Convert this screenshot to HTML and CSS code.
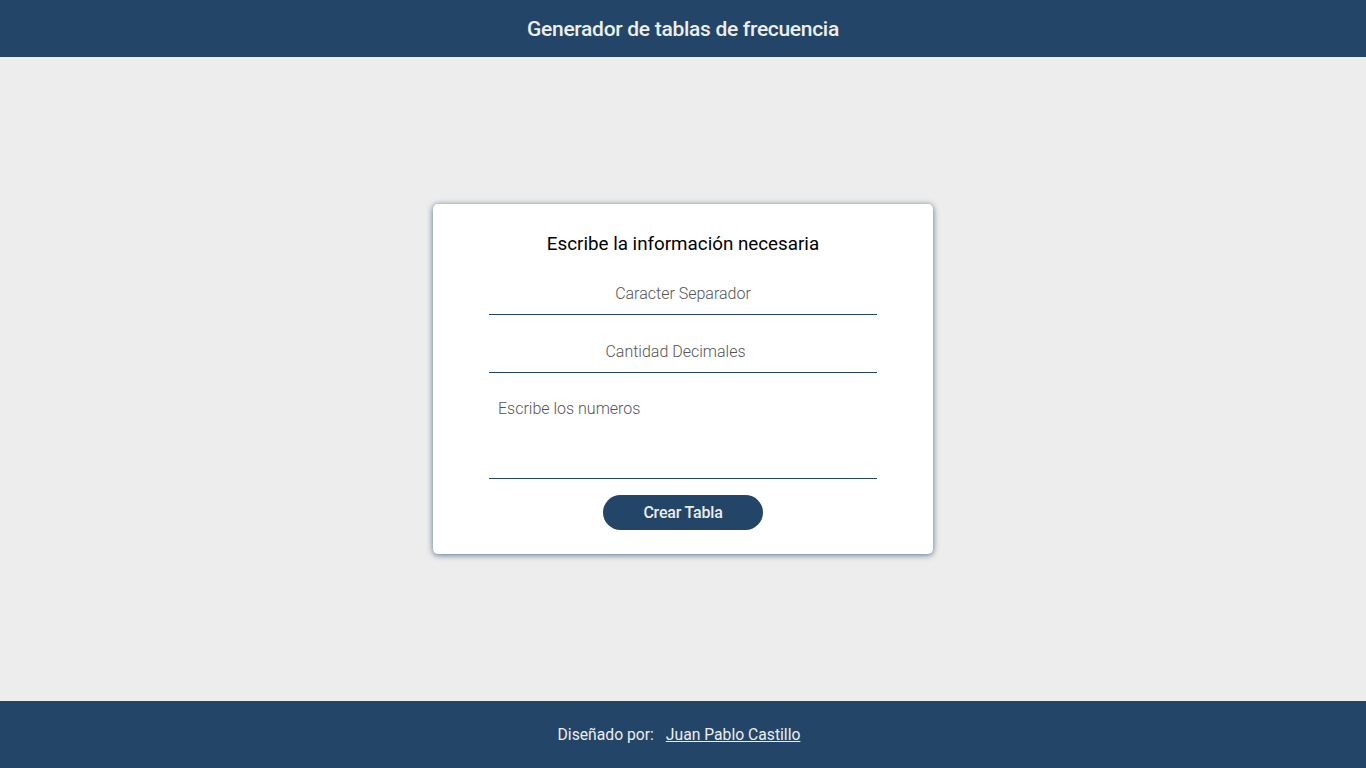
FILE: index.html
```html
<!DOCTYPE html>
<html lang="es">
<head>
<meta charset="utf-8">
<title>Generador de tablas de frecuencia</title>
<link rel="stylesheet" href="styles.css">
</head>
<body>
<header class="topbar">
  <h1 class="topbar-title">Generador de tablas de frecuencia</h1>
</header>
<main class="main">
  <form class="card">
    <h2 class="card-title">Escribe la información necesaria</h2>
    <input class="field" type="text" placeholder="Caracter Separador">
    <input class="field" type="number" placeholder="Cantidad Decimales">
    <textarea class="field area" placeholder="Escribe los numeros"></textarea>
    <button class="btn" type="button">Crear Tabla</button>
  </form>
</main>
<footer class="footer">
  <span class="footer-label">Diseñado por:</span>
  <a class="footer-link" href="#">Juan Pablo Castillo</a>
</footer>
</body>
</html>
```
FILE: styles.css
```css
* { box-sizing: border-box; }
html, body { margin: 0; padding: 0; }
body {
  height: 100vh;
  display: flex;
  flex-direction: column;
  font-family: Roboto, "Liberation Sans", sans-serif;
  background: #ededed;
}
.topbar {
  height: 57px;
  background: #234567;
  display: flex;
  align-items: center;
  justify-content: center;
  flex-shrink: 0;
}
.topbar-title {
  margin: 0;
  font-size: 21px;
  font-weight: 500;
  color: #eeeeee;
  letter-spacing: -0.3px;
}
.main {
  flex: 1;
  display: flex;
  align-items: center;
  justify-content: center;
}
.card {
  width: 500px;
  background: #ffffff;
  border-radius: 5px;
  box-shadow: 0 1px 6px rgba(35, 69, 103, 0.75);
  padding: 30px 56px 24px;
  display: flex;
  flex-direction: column;
  align-items: stretch;
}
.card-title {
  margin: 0 0 20px;
  text-align: center;
  font-size: 18.8px;
  line-height: 21px;
  font-weight: 400;
  color: #000;
}
.field {
  display: block;
  width: 100%;
  height: 40px;
  border: none;
  border-bottom: 1px solid #234567;
  outline: none;
  font-family: Roboto, "Liberation Sans", sans-serif;
  font-size: 16px;
  font-weight: 300;
  text-align: center;
  color: #333;
  background: transparent;
  margin: 0 0 18px;
  padding: 0 8px 2px;
}
.field::placeholder {
  color: #555;
  font-weight: 300;
}
.area {
  height: 88px;
  text-align: left;
  padding: 8px 9px;
  resize: none;
  margin-bottom: 16px;
}
.btn {
  align-self: center;
  width: 160px;
  height: 35px;
  border: none;
  border-radius: 18px;
  background: #234567;
  color: #eeeeee;
  font-family: Roboto, "Liberation Sans", sans-serif;
  font-size: 16px;
  font-weight: 500;
  letter-spacing: -0.2px;
  cursor: pointer;
}
.footer {
  height: 67px;
  flex-shrink: 0;
  background: #234567;
  display: flex;
  align-items: center;
  justify-content: center;
  gap: 12px;
  padding-right: 8px;
  font-size: 15.7px;
  color: #eeeeee;
}
.footer-link {
  color: #eeeeee;
  text-decoration: underline;
}
```
